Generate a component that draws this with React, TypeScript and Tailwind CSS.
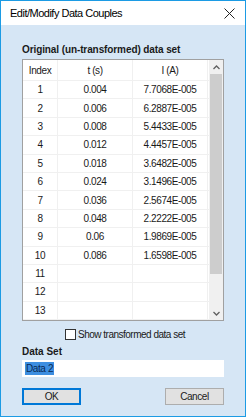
const ROWS: [string, string, string][] = [
  ["1", "0.004", "7.7068E-005"],
  ["2", "0.006", "6.2887E-005"],
  ["3", "0.008", "5.4433E-005"],
  ["4", "0.012", "4.4457E-005"],
  ["5", "0.018", "3.6482E-005"],
  ["6", "0.024", "3.1496E-005"],
  ["7", "0.036", "2.5674E-005"],
  ["8", "0.048", "2.2222E-005"],
  ["9", "0.06", "1.9869E-005"],
  ["10", "0.086", "1.6598E-005"],
  ["11", "", ""],
  ["12", "", ""],
  ["13", "", ""],
];

function Cell({ w, children }: { w: string; children?: React.ReactNode }) {
  return (
    <div className={`${w} flex items-center justify-center border-r border-[#f0f0f0]`}>
      {children}
    </div>
  );
}

export default function App() {
  return (
    <div
      className="flex h-[417px] w-[246px] flex-col border border-[#1c9be4] bg-[#d6e6f5] text-[10px] tracking-[-0.4px] text-[#1a1a1a]"
      style={{ fontFamily: "'Liberation Sans', Arial, sans-serif" }}
    >
      {/* title bar */}
      <div className="flex h-[24px] shrink-0 items-center justify-between bg-white pl-[9px] pr-[8px]">
        <span className="text-[11px] tracking-[-0.5px] text-black">Edit/Modify Data Couples</span>
        <svg width="11" height="11" viewBox="0 0 11 11" className="mr-[2px]">
          <path d="M0.5 0.5 L10.5 10.5 M10.5 0.5 L0.5 10.5" stroke="#222" strokeWidth="1" />
        </svg>
      </div>

      <div className="flex flex-1 flex-col px-[21px] pt-[18px]">
        <div className="whitespace-nowrap font-bold leading-[14px] tracking-[-0.1px]">
          Original (un-transformed) data set
        </div>

        {/* table */}
        <div className="mt-[2px] flex h-[262px] w-[202px] shrink-0 border border-[#a0a0a0] bg-white">
          <div className="flex flex-1 flex-col overflow-hidden">
            <div className="flex h-[21px] shrink-0 border-b border-[#f0f0f0]">
              <Cell w="w-[35px]">Index</Cell>
              <Cell w="w-[75px]">t (s)</Cell>
              <Cell w="w-[75px]">I (A)</Cell>
            </div>
            {ROWS.map((r) => (
              <div key={r[0]} className="flex h-[18.4px] shrink-0 border-b border-[#f0f0f0]">
                <Cell w="w-[35px]">{r[0]}</Cell>
                <Cell w="w-[75px]">{r[1]}</Cell>
                <Cell w="w-[75px]">{r[2]}</Cell>
              </div>
            ))}
          </div>
          {/* scrollbar */}
          <div className="flex w-[14px] flex-col items-center bg-[#f0f0f0]">
            <div className="flex h-[14px] w-full items-center justify-center">
              <svg width="7" height="5" viewBox="0 0 7 5">
                <path d="M0.5 4 L3.5 1 L6.5 4" stroke="#606060" strokeWidth="1.3" fill="none" />
              </svg>
            </div>
            <div className="h-[200px] w-[12px] bg-[#cdcdcd]" />
            <div className="flex-1" />
            <div className="flex h-[14px] w-full items-center justify-center">
              <svg width="7" height="5" viewBox="0 0 7 5">
                <path d="M0.5 1 L3.5 4 L6.5 1" stroke="#606060" strokeWidth="1.3" fill="none" />
              </svg>
            </div>
          </div>
        </div>

        {/* checkbox */}
        <div className="mt-[8px] flex h-[11px] items-center justify-center pl-[4px]">
          <div className="mr-[2px] h-[11px] w-[11px] border border-[#333] bg-white" />
          <span className="tracking-[-0.5px]">Show transformed data set</span>
        </div>

        <div className="mt-[5px] font-bold leading-[14px] tracking-[0px]">Data Set</div>
        <div className="mt-[1px] flex h-[17px] w-[202px] items-center bg-white pl-[3px]">
          <span className="bg-[#3d8ee0] px-[1px] leading-[13px] text-[#0a2a55]">Data 2</span>
        </div>

        <div className="mt-[11px] flex justify-between">
          <button className="flex h-[17px] w-[59px] items-center justify-center border-2 border-[#0078d7] bg-[#e1e1e1]">
            OK
          </button>
          <button className="flex h-[17px] w-[59px] items-center justify-center border border-[#adadad] bg-[#e1e1e1]">
            Cancel
          </button>
        </div>
      </div>
    </div>
  );
}
